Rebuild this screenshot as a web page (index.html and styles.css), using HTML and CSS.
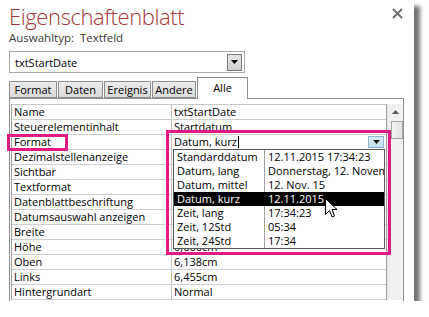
FILE: index.html
```html
<!DOCTYPE html>
<html lang="de">
<head>
	<meta charset="UTF-8">
	<title>Eigenschaftenblatt</title>
	<link rel="stylesheet" href="styles.css">
</head>
<body>
<div class="sheet">
	<svg class="close" width="11" height="11" viewBox="0 0 11 11"><path d="M1 1 L10 10 M10 1 L1 10" stroke="#6d6d6d" stroke-width="1.8"/></svg>
	<h1 class="title">Eigenschaftenblatt</h1>
	<div class="seltype">Auswahltyp:&nbsp; Textfeld</div>
	<div class="combo">
		<span class="combo_text">txtStartDate</span>
		<span class="combo_btn"><svg width="7" height="4" viewBox="0 0 7 4"><path d="M0 0 H7 L3.5 4 Z" fill="#000"/></svg></span>
	</div>
	<ul class="tabs">
		<li class="t1">Format</li>
		<li class="t2">Daten</li>
		<li class="t3">Ereignis</li>
		<li class="t4">Andere</li>
		<li class="t5 on">Alle</li>
	</ul>
	<div class="panel">
		<div class="grid">
			<div class="row"><div class="name">Name</div><div class="val">txtStartDate</div></div>
			<div class="row"><div class="name">Steuerelementinhalt</div><div class="val">Startdatum</div></div>
			<div class="row"><div class="name">Format</div>
				<div class="val edit">
					<span class="edit_text">Datum, kurz<i class="caret"></i></span>
					<span class="edit_btn"><svg width="7" height="4" viewBox="0 0 7 4"><path d="M0 0 H7 L3.5 4 Z" fill="#1a1a1a"/></svg></span>
					<ul class="droplist">
						<li><span>Standarddatum</span><span>12.11.2015 17:34:23</span></li>
						<li><span>Datum, lang</span><span>Donnerstag, 12. Novem</span></li>
						<li><span>Datum, mittel</span><span>12. Nov. 15</span></li>
						<li class="sel"><span>Datum, kurz</span><span>12.11.2015</span></li>
						<li><span>Zeit, lang</span><span>17:34:23</span></li>
						<li><span>Zeit, 12Std</span><span>05:34</span></li>
						<li><span>Zeit, 24Std</span><span>17:34</span></li>
					</ul>
				</div>
			</div>
			<div class="row"><div class="name">Dezimalstellenanzeige</div><div class="val"></div></div>
			<div class="row"><div class="name">Sichtbar</div><div class="val"></div></div>
			<div class="row"><div class="name">Textformat</div><div class="val"></div></div>
			<div class="row"><div class="name">Datenblattbeschriftung</div><div class="val"></div></div>
			<div class="row"><div class="name">Datumsauswahl anzeigen</div><div class="val"></div></div>
			<div class="row"><div class="name">Breite</div><div class="val"></div></div>
			<div class="row"><div class="name">Höhe</div><div class="val">0,666cm</div></div>
			<div class="row"><div class="name">Oben</div><div class="val">6,138cm</div></div>
			<div class="row"><div class="name">Links</div><div class="val">6,455cm</div></div>
			<div class="row"><div class="name">Hintergrundart</div><div class="val">Normal</div></div>
		</div>
		<div class="scroll">
			<div class="scroll_up"><svg width="7" height="4" viewBox="0 0 7 4"><path d="M0 4 H7 L3.5 0 Z" fill="#5a5a5a"/></svg></div>
			<div class="scroll_thumb"></div>
		</div>
	</div>
	<div class="mark mark_name"></div>
	<div class="mark mark_list"></div>
	<svg class="cursor" width="13" height="21" viewBox="0 0 13 21"><path d="M0.5 0.5 V16.5 L4.5 12.5 L7 19 L9.5 18 L7 11.5 H12 Z" fill="#fff" stroke="#000" stroke-width="1" stroke-linejoin="miter"/></svg>
</div>
</body>
</html>
```

FILE: styles.css
```css
*{
	margin:0;
	padding:0;
	box-sizing:border-box;
}
ul{
	list-style:none;
}
body{
	background:#fff;
	font-family:"Open Sans","Noto Sans",sans-serif;
	font-size:11px;
	color:#000;
}
.sheet{
	position:relative;
	width:414px;
	height:301px;
	padding-left:9px;
	background:#fff;
	box-shadow:6px 6px 4px rgba(0,0,0,.55);
}
.close{
	position:absolute;
	left:392px;
	top:8px;
}
.title{
	height:31px;
	padding-top:1px;
	font-size:22px;
	font-weight:300;
	letter-spacing:-0.4px;
	line-height:30px;
	color:#a4373a;
}
.seltype{
	height:14px;
	font-size:11.5px;
	line-height:14px;
	color:#3a3a3a;
}
.combo{
	display:flex;
	align-items:center;
	justify-content:space-between;
	width:236px;
	height:22px;
	margin-top:6px;
	padding:0 2px 0 5px;
	border:1px solid #ababab;
}
.combo_btn{
	display:flex;
	align-items:center;
	justify-content:center;
	width:15px;
	height:17px;
	border:1px solid #7a7a7a;
	background:linear-gradient(#e6e6e6,#cfcfcf);
}
.tabs{
	display:flex;
	align-items:flex-end;
	gap:1px;
	height:21px;
	margin-top:4px;
	position:relative;
	z-index:1;
}
.tabs li{
	height:17px;
	line-height:15px;
	text-align:center;
	border:1px solid #8f8f8f;
	background:linear-gradient(#ececec,#d9d9d9);
}
.tabs .t1{width:48px;}
.tabs .t2{width:45px;}
.tabs .t3{width:47px;}
.tabs .t4{width:44px;}
.tabs .t5{width:51px;}
.tabs li.on{
	height:22px;
	line-height:20px;
	margin-bottom:-1px;
	border-bottom:none;
	background:#fff;
}
.panel{
	display:flex;
	align-items:flex-start;
	width:395px;
	height:203px;
	padding:5px 0 0 1px;
	border:1px solid #8f8f8f;
	border-bottom:none;
}
.grid{
	width:376px;
	border:1px solid #a0a0a0;
	border-top-color:#c8c8c8;
	border-bottom:none;
}
.row{
	display:flex;
	height:15px;
	border-bottom:1px solid #cfcfcf;
}
.name{
	width:160px;
	padding-left:2px;
	line-height:14px;
	border-right:1px solid #c0c0c0;
	white-space:nowrap;
}
.val{
	flex:1;
	padding-left:2px;
	line-height:14px;
	white-space:nowrap;
	overflow:hidden;
}
.val.edit{
	position:relative;
	display:flex;
	justify-content:space-between;
	overflow:visible;
	z-index:2;
}
.caret{
	display:inline-block;
	width:1px;
	height:12px;
	margin-left:1px;
	vertical-align:-2px;
	background:#000;
}
.edit_btn{
	display:flex;
	align-items:center;
	justify-content:center;
	width:16px;
	height:12px;
	margin:1px 2px 0 0;
	border:1px solid #8fb2d6;
	background:linear-gradient(#dcebf8,#c3dbf1);
}
.droplist{
	position:absolute;
	left:1px;
	top:14px;
	width:212px;
	border:1px solid #5a5a5a;
	background:#fff;
}
.droplist li{
	display:flex;
	height:14px;
	line-height:14px;
}
.droplist li span{
	white-space:nowrap;
	overflow:hidden;
}
.droplist li span:first-child{
	width:91px;
	padding-left:3px;
	border-right:1px solid #a0a0a0;
}
.droplist li span:last-child{
	flex:1;
	padding-left:3px;
}
.droplist li.sel{
	background:#000;
	color:#fff;
}
.droplist li.sel span:first-child{
	border-right-color:#000;
}
.scroll{
	width:16px;
	height:196px;
	background:#f0f0f0;
	border-left:1px solid #e4e4e4;
}
.scroll_up{
	display:flex;
	align-items:center;
	justify-content:center;
	height:15px;
}
.scroll_thumb{
	width:12px;
	height:18px;
	margin:2px 0 0 3px;
	border:1px solid #a6a6a6;
	background:linear-gradient(90deg,#f4f4f4,#e2e2e2);
}
.mark{
	position:absolute;
	border:3px solid #e01b84;
	z-index:3;
}
.mark_name{
	left:7px;
	top:134px;
	width:61px;
	height:17px;
}
.mark_list{
	left:166px;
	top:130px;
	width:225px;
	height:125px;
}
.cursor{
	position:absolute;
	left:325px;
	top:198px;
	z-index:4;
}
```
